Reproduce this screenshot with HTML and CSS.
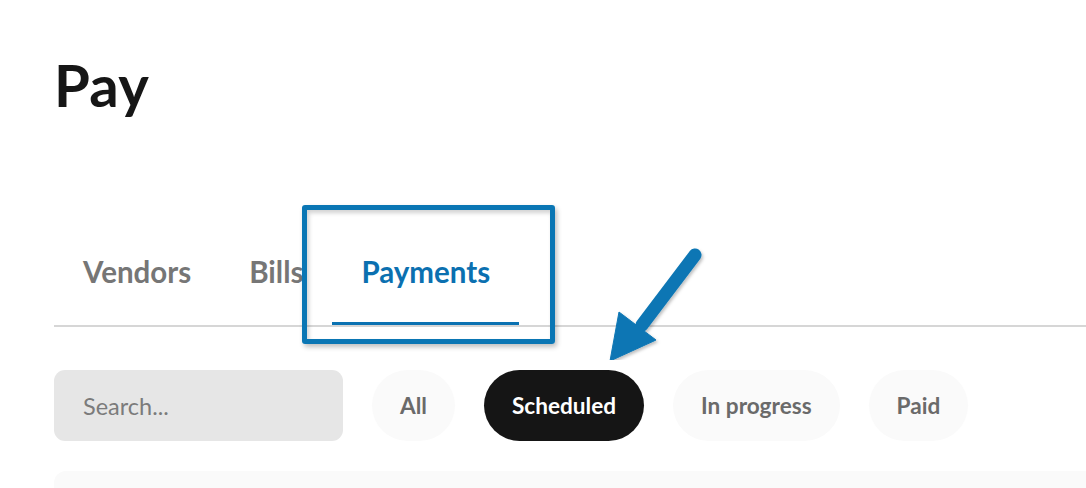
FILE: index.html
```html
<!DOCTYPE html>
<html lang="en">
<head>
    <meta charset="UTF-8">
    <meta name="viewport" content="width=device-width, initial-scale=1.0">
    <title>Pay</title>
    <link rel="stylesheet" href="styles.css">
</head>
<body>

<div class="pay-page">
    <h1>Pay</h1>

    <!-- Tabs -->
    <div class="tab-bar">
        <div class="tab">Vendors</div>
        <div class="tab">Bills</div>
        <div class="tab active">Payments</div>
    </div>

    <!-- Filters -->
    <div class="filter-row">
        <input type="text" class="search-box" placeholder="Search...">
        <button class="pill">All</button>
        <button class="pill selected">Scheduled</button>
        <button class="pill">In progress</button>
        <button class="pill">Paid</button>
    </div>

    <div class="payment-list"></div>
</div>

<!-- Annotations -->
<div class="highlight-box"></div>
<svg class="arrow" width="120" height="130" viewBox="0 0 120 130">
    <defs>
        <filter id="arrowShadow" x="-20%" y="-20%" width="140%" height="140%">
            <feDropShadow dx="1.5" dy="2" stdDeviation="1.5" flood-color="#000" flood-opacity="0.25"/>
        </filter>
    </defs>
    <g filter="url(#arrowShadow)" fill="#0a76b4" stroke="#0a76b4">
        <line x1="95" y1="25" x2="42" y2="95" stroke-width="13" stroke-linecap="round"/>
        <polygon points="19,82 56,110 10,131" stroke-width="1" stroke-linejoin="round"/>
    </g>
</svg>

</body>
</html>
```

FILE: styles.css
```css
body {
    font-family: 'Lato', 'Noto Sans', sans-serif;
    margin: 0;
    padding: 0;
    background: #fff;
    overflow: hidden;
}
.pay-page {
    padding: 56px 0 0 54px;
}
.pay-page h1 {
    font-size: 58px;
    line-height: 58px;
    font-weight: bold;
    color: #161616;
    margin: 0;
    letter-spacing: 0.3px;
}
.tab-bar {
    display: flex;
    margin-top: 141px;
    border-bottom: 2px solid #d6d6d6;
}
.tab {
    font-size: 29.5px;
    line-height: 34px;
    font-weight: bold;
    color: #767676;
    padding: 0 29px 36px;
    box-sizing: border-box;
}
.tab.active {
    color: #0b70b0;
    padding-bottom: 33px;
    border-bottom: 3px solid #0b72b2;
}
.filter-row {
    display: flex;
    gap: 29px;
    margin-top: 43px;
}
.search-box {
    width: 289px;
    height: 71px;
    box-sizing: border-box;
    padding: 0 29px;
    border: none;
    border-radius: 11px;
    background-color: #e6e6e6;
    font-family: 'Lato', 'Noto Sans', sans-serif;
    font-size: 23.5px;
    outline: none;
}
.search-box::placeholder {
    color: #7b7b7b;
}
.pill {
    height: 71px;
    padding: 0 28px;
    border: none;
    border-radius: 36px;
    background-color: #fafafa;
    color: #6a6a6a;
    font-family: 'Lato', 'Noto Sans', sans-serif;
    font-size: 22.6px;
    font-weight: bold;
}
.pill.selected {
    background-color: #151515;
    color: #fff;
}
.payment-list {
    margin-top: 30px;
    height: 17px;
    background-color: #fafafa;
    border-radius: 12px 0 0 0;
}
.highlight-box {
    position: absolute;
    left: 302px;
    top: 205px;
    width: 253px;
    height: 139px;
    box-sizing: border-box;
    border: 5px solid #0a76b4;
    border-radius: 3px;
    box-shadow: 2px 3px 5px rgba(0, 0, 0, 0.25), inset 2px 3px 4px rgba(0, 0, 0, 0.18);
}
.arrow {
    position: absolute;
    left: 600px;
    top: 230px;
}
```
